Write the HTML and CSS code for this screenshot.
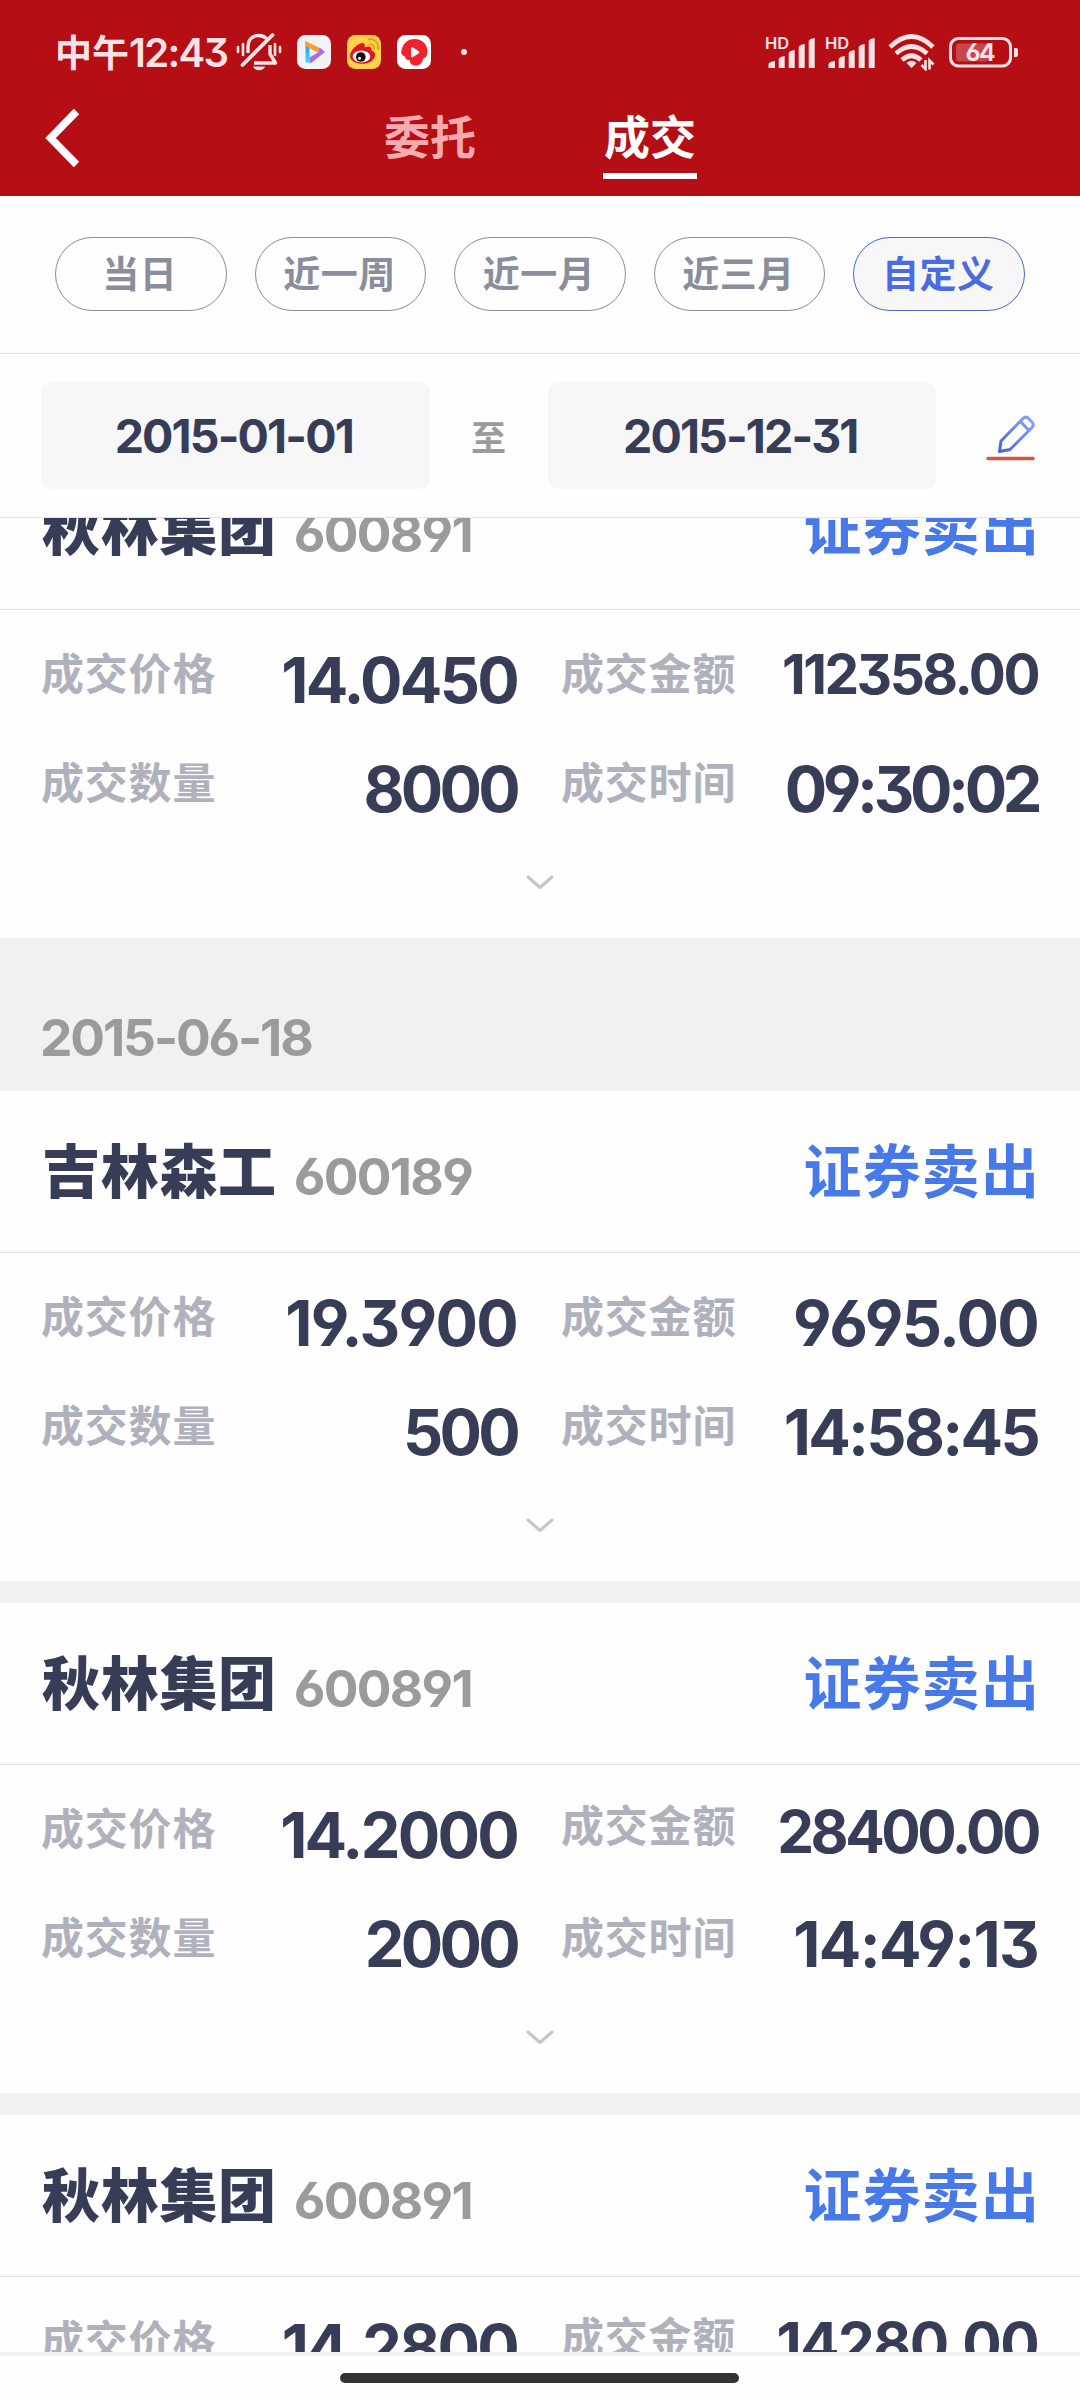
FILE: index.html
```html
<!DOCTYPE html>
<html lang="zh-CN">
<head>
    <meta charset="UTF-8">
    <meta name="viewport" content="width=device-width, initial-scale=1.0">
    <title>成交</title>
    <link rel="stylesheet" href="styles.css">
</head>
<body>
    <header class="header">
        <div class="status-bar">
            <div class="clock">中午<span class="clock-num">12:43</span></div>
            <svg class="icon-mute" width="46" height="40" viewBox="0 0 46 40" fill="none" stroke="#fbe3e5" stroke-width="3.400">
                <path d="M12 21V15.500C12 8 16 3.500 22.500 3.500C26 3.500 28.500 4.600 30.500 6.500M34 13V22L39.500 31H18" stroke-linejoin="round"/>
                <path d="M6.500 33L36.500 3" stroke-linecap="round" stroke-width="3.800"/>
                <path d="M2 15V20M7 12V23M39 12V23M44 15V20" stroke-linecap="round" stroke-width="2.600"/>
                <path d="M17 34.500H29Q27.500 38.300 23 38.300Q18.500 38.300 17 34.500Z" fill="#fbe3e5" stroke="none"/>
            </svg>
            <svg class="app-icon" width="34" height="34" viewBox="0 0 34 34">
                <defs>
                    <linearGradient id="cyan" x1="0" y1="0" x2="0" y2="1"><stop offset="0" stop-color="#1b8df0"/><stop offset="1" stop-color="#4fd6fb"/></linearGradient>
                </defs>
                <rect width="34" height="34" rx="8.500" fill="#f3f3f5"/>
                <path d="M8.500 6V27.500H12.500V12Z" fill="url(#cyan)"/>
                <path d="M8.500 6L23 13.200L20.500 17.500L8.500 11Z" fill="#ff9c2e"/>
                <path d="M22.800 12.500L28 17L14 28L12.500 27.500V22.500L21 17.500Z" fill="#a56cf5"/>
            </svg>
            <svg class="app-icon" width="34" height="34" viewBox="0 0 34 34">
                <rect width="34" height="34" rx="8.500" fill="#fed24a"/>
                <path d="M3 21C3 15 11 8 16 8C18 8 18 11 17.500 12.500C21 11 25 11 24.500 15.500C27.500 16.500 29 19 27.500 22.500C25 28 18 29.500 12 28.500C7 27.500 3 25 3 21Z" fill="#e0161d"/>
                <ellipse cx="14.500" cy="21.500" rx="8.800" ry="6" fill="#fff"/>
                <circle cx="13.800" cy="22" r="4.800" fill="#111"/>
                <circle cx="12.500" cy="23.300" r="1.500" fill="#fff"/>
                <path d="M21.500 4.500C27 3 32 7.500 31 14M22.500 9.500C25.500 9 27.500 11 27 14" fill="none" stroke="#eda224" stroke-width="2.200" stroke-linecap="round"/>
            </svg>
            <svg class="app-icon" width="34" height="34" viewBox="0 0 34 34">
                <rect width="34" height="34" rx="8.500" fill="#fff"/>
                <path d="M17.500 4C25.500 4 30.500 9.500 30.500 17C30.500 21 28 23 26 24C25.500 28 22.500 30.500 19 30.500C15 30.500 12.500 28.500 12.800 25C10 25.500 8 24 8 21.500C5 20.500 3.500 18 4.500 15.500C6 8.500 10.500 4 17.500 4Z" fill="#f0232d"/>
                <path d="M14 13.500C14 12.300 15 12 16 12.500L21.500 16C22.600 16.700 22.600 17.700 21.500 18.400L16 22C15 22.600 14 22 14 21Z" fill="#fff"/>
            </svg>
            <span class="more-dot"></span>
            <div class="status-right">
                <svg width="54" height="42" viewBox="0 -4 54 42" fill="#fbe3e5">
                    <text class="hd" x="3" y="13.500">HD</text>
                    <path d="M6.500 33V29.500Q6.500 26.500 13 26V33ZM16.700 33V24Q17.500 21.500 22.700 21V33ZM26.700 33V18Q27.500 15.500 32.700 15V33ZM36.700 33V12Q37.500 9.500 42.700 9V33ZM46.700 33V6Q47.500 3.500 52.700 3V33Z"/>
                </svg>
                <svg class="signal-two" width="54" height="42" viewBox="0 -4 54 42" fill="#fbe3e5">
                    <text class="hd" x="3" y="13.500">HD</text>
                    <path d="M6.500 33V29.500Q6.500 26.500 13 26V33ZM16.700 33V24Q17.500 21.500 22.700 21V33ZM26.700 33V18Q27.500 15.500 32.700 15V33ZM36.700 33V12Q37.500 9.500 42.700 9V33ZM46.700 33V6Q47.500 3.500 52.700 3V33Z"/>
                </svg>
                <svg class="wifi" width="48" height="38" viewBox="0 0 48 38" fill="none" stroke="#fbe3e5" stroke-width="4.600">
                    <path d="M2 14Q23.500 -7 45 14M8 20.500Q23.500 6.500 39 20.500M14 27Q23.500 18.500 33 27"/>
                    <path d="M23.500 35L18.500 30Q23.500 25.500 28.500 30Z" fill="#fbe3e5" stroke="none"/>
                    <path d="M37.500 27V36L33.500 32M41.500 36.500V27.500L45.500 31.500" stroke-width="2.600"/>
                </svg>
                <svg class="battery" width="70" height="32" viewBox="0 0 70 32">
                    <rect x="1.500" y="2.500" width="60" height="27.500" rx="8" fill="none" stroke="#fbe3e5" stroke-width="3"/>
                    <rect x="7" y="7.500" width="32" height="18" rx="3" fill="#fff" opacity="0.240"/>
                    <path d="M65 12H67Q69 12 69 14V19Q69 21 67 21H65Z" fill="#fbe3e5"/>
                    <text class="battery-num" x="16.500" y="25">64</text>
                </svg>
            </div>
        </div>
        <nav class="nav">
            <svg class="back" width="36" height="60" viewBox="0 0 36 60" fill="none" stroke="#fff" stroke-width="7.500">
                <path d="M31.500 3.500L5.500 30L31.500 56.500"/>
            </svg>
            <div class="tabs">
                <div class="tab">委托</div>
                <div class="tab active">成交</div>
            </div>
        </nav>
    </header>

    <div class="ranges">
        <div class="pill">当日</div>
        <div class="pill">近一周</div>
        <div class="pill">近一月</div>
        <div class="pill">近三月</div>
        <div class="pill active">自定义</div>
    </div>

    <div class="dates">
        <div class="date-box">2015-01-01</div>
        <div class="date-to">至</div>
        <div class="date-box">2015-12-31</div>
        <svg class="edit" width="50" height="50" viewBox="0 0 50 50" fill="none" stroke-linejoin="round">
            <defs>
                <linearGradient id="pen" x1="1" y1="0" x2="0" y2="1"><stop offset="0" stop-color="#8ba6f5"/><stop offset="1" stop-color="#4466d9"/></linearGradient>
            </defs>
            <path d="M15 28L37 5.500Q39.500 3 42 5L46 9Q48.500 11.500 46 14.500L24 36.500L13.500 38.500ZM34.500 8.500L43 17.500" stroke="url(#pen)" stroke-width="3"/>
            <path d="M2 45.500H47" stroke="#dc5440" stroke-width="3.400" stroke-linecap="round"/>
        </svg>
    </div>

    <main class="list">
        <section class="card first">
            <div class="card-head">
                <span class="name">秋林集团</span>
                <span class="code">600891</span>
                <span class="side">证券卖出</span>
            </div>
            <div class="card-body">
                <div class="cell"><span class="label">成交价格</span><span class="value">14.0450</span></div>
                <div class="cell"><span class="label">成交金额</span><span class="value small">112358.00</span></div>
                <div class="cell"><span class="label">成交数量</span><span class="value tight">8000</span></div>
                <div class="cell"><span class="label">成交时间</span><span class="value time">09:30:02</span></div>
            </div>
            <svg class="more" width="30" height="16" viewBox="0 0 30 16"><path d="M3 2L15 12.500L27 2"/></svg>
        </section>

        <h2 class="day">2015-06-18</h2>

        <section class="card">
            <div class="card-head">
                <span class="name">吉林森工</span>
                <span class="code">600189</span>
                <span class="side">证券卖出</span>
            </div>
            <div class="card-body">
                <div class="cell"><span class="label">成交价格</span><span class="value loose">19.3900</span></div>
                <div class="cell"><span class="label">成交金额</span><span class="value loose">9695.00</span></div>
                <div class="cell"><span class="label">成交数量</span><span class="value tight">500</span></div>
                <div class="cell"><span class="label">成交时间</span><span class="value">14:58:45</span></div>
            </div>
            <svg class="more" width="30" height="16" viewBox="0 0 30 16"><path d="M3 2L15 12.500L27 2"/></svg>
        </section>

        <section class="card">
            <div class="card-head">
                <span class="name">秋林集团</span>
                <span class="code">600891</span>
                <span class="side">证券卖出</span>
            </div>
            <div class="card-body">
                <div class="cell"><span class="label">成交价格</span><span class="value">14.2000</span></div>
                <div class="cell raised"><span class="label">成交金额</span><span class="value medium tight">28400.00</span></div>
                <div class="cell"><span class="label">成交数量</span><span class="value tight">2000</span></div>
                <div class="cell"><span class="label">成交时间</span><span class="value loose">14:49:13</span></div>
            </div>
            <svg class="more" width="30" height="16" viewBox="0 0 30 16"><path d="M3 2L15 12.500L27 2"/></svg>
        </section>

        <section class="card">
            <div class="card-head">
                <span class="name">秋林集团</span>
                <span class="code">600891</span>
                <span class="side">证券卖出</span>
            </div>
            <div class="card-body">
                <div class="cell"><span class="label">成交价格</span><span class="value">14.2800</span></div>
                <div class="cell raised"><span class="label">成交金额</span><span class="value medium loose">14280.00</span></div>
            </div>
        </section>
    </main>

    <footer class="home-bar">
        <div class="home-handle"></div>
    </footer>
</body>
</html>
```

FILE: styles.css
```css
* {
    margin: 0;
    padding: 0;
    box-sizing: border-box;
}

body {
    width: 1080px;
    height: 2400px;
    overflow: hidden;
    display: flex;
    flex-direction: column;
    background: #fefefe;
    font-family: "Noto Sans CJK SC", sans-serif;
    font-weight: 700;
    color: #373c57;
}

svg {
    display: block;
    flex: none;
}

/* header */
.header {
    height: 196px;
    flex: none;
    background: #b50f15;
}

.status-bar {
    height: 104px;
    padding: 0 61px 0 55px;
    display: flex;
    align-items: center;
    color: #fbe3e5;
}

.clock {
    width: 181px;
    font-size: 37px;
    line-height: 100px;
    white-space: nowrap;
}

.clock-num {
    font-family: Inter, sans-serif;
    font-size: 40px;
    font-weight: 600;
    letter-spacing: -1.7px;
    font-feature-settings: "cv09";
}

.app-icon {
    margin-left: 16px;
}

.icon-mute + .app-icon {
    margin-left: 15px;
}

.more-dot {
    width: 6px;
    height: 6px;
    margin-left: 30px;
    border-radius: 50%;
    background: #fbe3e5;
}

.status-right {
    margin-left: auto;
    display: flex;
    align-items: center;
}

.signal-two {
    margin-left: 6px;
}

.wifi {
    margin-left: 12px;
}

.battery {
    margin-left: 13px;
}

.hd {
    font: 600 16.5px Inter, sans-serif;
}

.battery-num {
    font: 700 24.5px Inter, sans-serif;
    letter-spacing: -1.5px;
    font-feature-settings: "cv03";
    fill: #fbe3e5;
}

.nav {
    display: grid;
    grid-template-columns: 1fr auto 1fr;
    align-items: start;
}

.back {
    margin: 4px 0 0 45px;
}

.tabs {
    display: flex;
    gap: 126px;
}

.tab {
    width: 94px;
    font-size: 46px;
    line-height: 61px;
    text-align: center;
    color: #f7abae;
}

.tab.active {
    padding-bottom: 8px;
    border-bottom: 6px solid #fff;
    color: #fff;
}

/* range filter */
.ranges {
    height: 158px;
    flex: none;
    padding: 41px 55px 0;
    display: flex;
    gap: 28px;
    border-bottom: 1px solid #e3e4e6;
}

.pill {
    flex: 1;
    height: 74px;
    padding-right: 2px;
    border: 1px solid #8a8d99;
    border-radius: 37px;
    font-size: 37px;
    line-height: 68px;
    letter-spacing: 0.5px;
    text-align: center;
    color: #8a8e9c;
}

.pill.active {
    border-color: #4b69c8;
    background: #f7f7f8;
    color: #4d6be0;
}

.dates {
    height: 164px;
    flex: none;
    padding: 0 44px 0 41px;
    display: flex;
    align-items: center;
    border-bottom: 1px solid #e3e4e6;
}

.date-box {
    width: 388.5px;
    height: 107px;
    padding-right: 3px;
    border-radius: 10px;
    background: #f7f7f8;
    font-family: Inter, sans-serif;
    font-size: 46.5px;
    line-height: 108px;
    letter-spacing: -1.85px;
    font-feature-settings: "cv03", "cv04", "cv09";
    text-align: center;
}

.date-to {
    width: 118px;
    font-size: 35px;
    line-height: 102px;
    text-align: center;
    color: #9b9b9b;
}

.edit {
    margin: 5px 0 0 auto;
}

/* trade list */
.list {
    height: 1834px;
    flex: none;
    overflow: hidden;
    background: #f1f1f1;
}

.card {
    height: 490px;
    margin-bottom: 22px;
    background: #fefefe;
}

.card.first {
    margin: -70px 0 0;
}

.card-head {
    height: 162px;
    padding: 0 44px 0 42px;
    display: flex;
    align-items: flex-start;
    border-bottom: 1px solid #e3e4e6;
}

.name {
    font-size: 58px;
    font-weight: 900;
    line-height: 154px;
    letter-spacing: 0.7px;
}

.code {
    margin-left: 17px;
    font-family: Inter, sans-serif;
    font-size: 51.5px;
    line-height: 170px;
    letter-spacing: -1.7px;
    font-feature-settings: "cv03", "cv04", "cv09";
    color: #9b9b9b;
}

.side {
    margin-left: auto;
    margin-right: -4px;
    font-size: 58px;
    line-height: 154px;
    letter-spacing: 1.1px;
    color: #4779e8;
}

.card-body {
    height: 233px;
    padding: 15px 42px 0 41px;
    display: grid;
    grid-template-columns: 476px 477px;
    grid-auto-rows: 109px;
    column-gap: 44px;
}

.cell {
    display: flex;
    justify-content: space-between;
    align-items: flex-start;
}

.label {
    font-size: 43px;
    line-height: 93px;
    letter-spacing: 0.8px;
    color: #afb1bd;
}

.value {
    font-family: Inter, sans-serif;
    font-size: 63px;
    line-height: 110px;
    letter-spacing: -0.043em;
    font-feature-settings: "cv03", "cv04", "cv09";
}

.value.small {
    font-size: 55px;
    line-height: 98px;
    letter-spacing: -0.045em;
}

.value.medium {
    font-size: 58.5px;
    line-height: 104px;
}

.value.time {
    letter-spacing: -0.07em;
}

.value.tight {
    letter-spacing: -0.059em;
}

.value.loose {
    letter-spacing: -0.027em;
}

.raised .label {
    line-height: 87px;
}

.more {
    margin: 32px auto 0;
    fill: none;
    stroke: #c4c6cc;
    stroke-width: 3;
    stroke-linecap: round;
    stroke-linejoin: round;
}

.day {
    height: 153px;
    padding: 46px 0 0 40px;
    font-family: Inter, sans-serif;
    font-size: 51.5px;
    line-height: 107px;
    letter-spacing: -2.1px;
    font-feature-settings: "cv03", "cv04", "cv09";
    color: #9b9b9b;
}

/* system home indicator */
.home-bar {
    height: 48px;
    flex: none;
    padding: 17px 2px 0 0;
    border-top: 4px solid #f1f1f1;
}

.home-handle {
    width: 399px;
    height: 10px;
    margin: 0 auto;
    border-radius: 5px;
    background: #333;
}
```
